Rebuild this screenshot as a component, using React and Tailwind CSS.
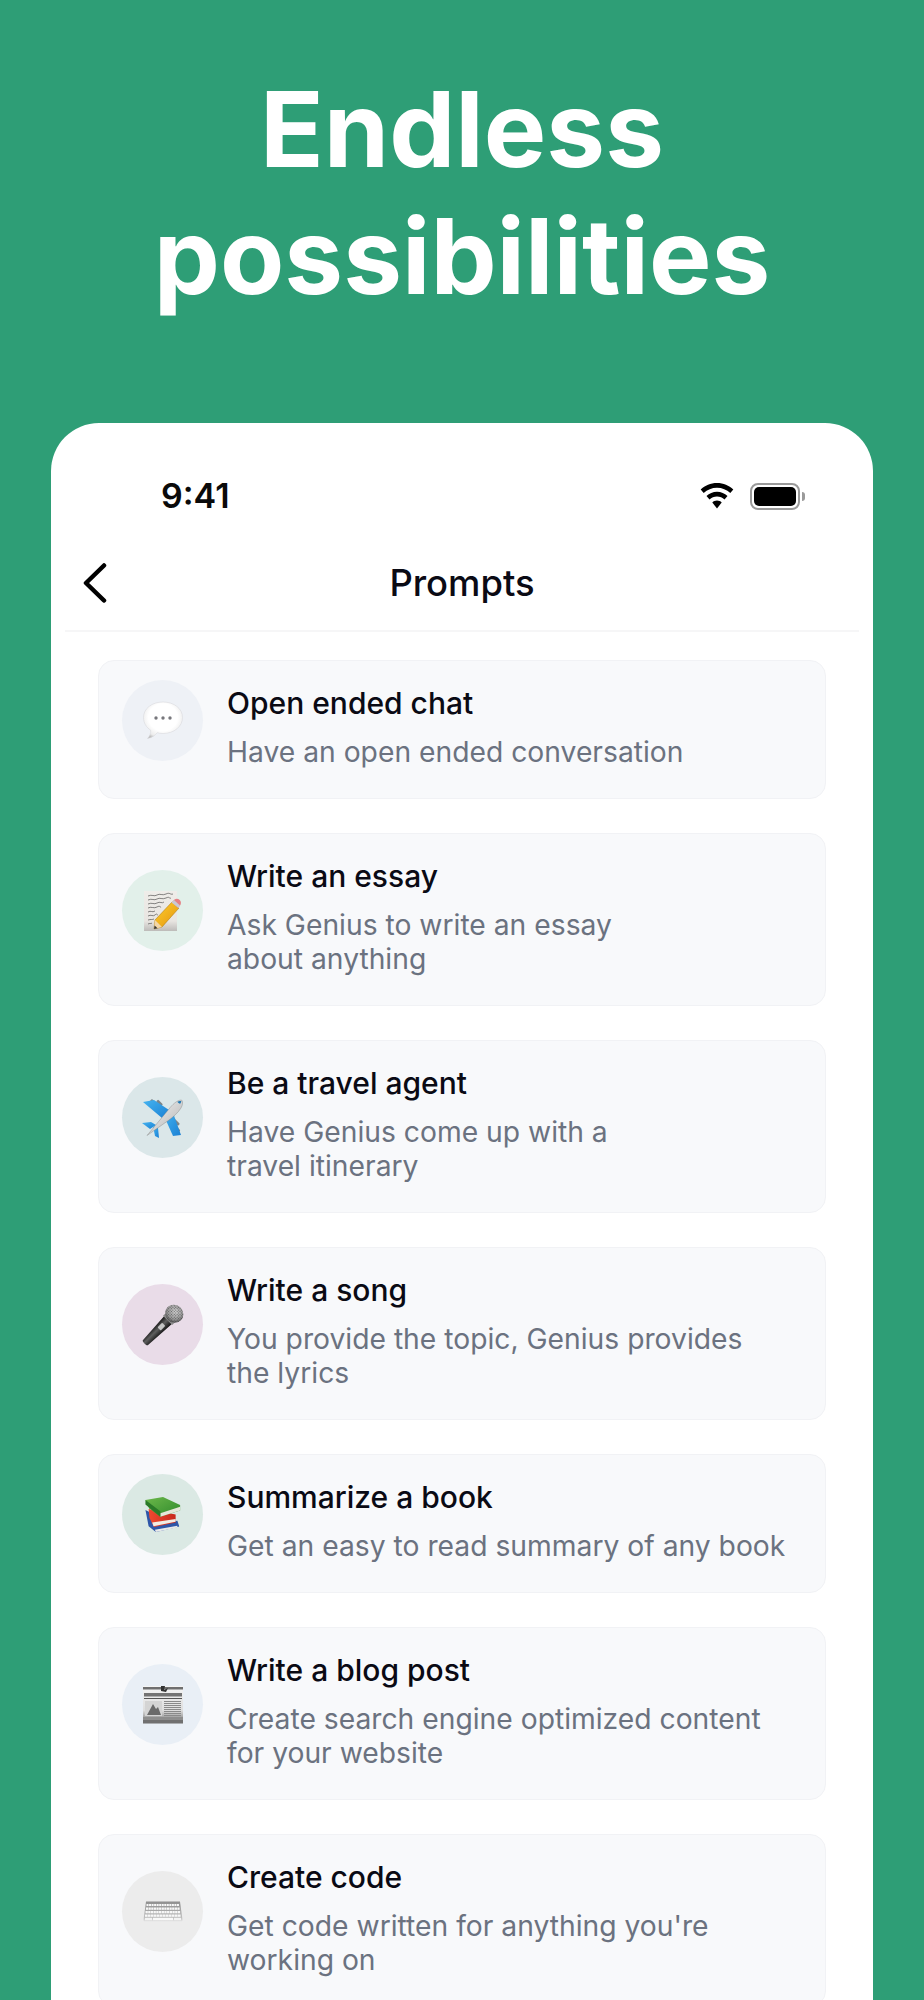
import React from "react";

function ChatIcon() {
  return (
    <svg width="44" height="44" viewBox="0 0 44 44">
      <defs>
        <radialGradient id="cg" cx="50%" cy="42%" r="62%">
          <stop offset="0.6" stopColor="#ffffff" />
          <stop offset="0.88" stopColor="#ececec" />
          <stop offset="1" stopColor="#bdbdbd" />
        </radialGradient>
      </defs>
      <path d="M22 3C33 3 41.500 9.500 41.500 18.500C41.500 27.500 33 34.500 22 34.500C19.800 34.500 17.900 34.200 16.200 33.700C14 36.500 11 38.700 6.500 39.500C8.800 37 9.800 34.500 9.700 31.200C5.300 28.400 2.500 23.800 2.500 18.500C2.500 9.500 11 3 22 3Z" fill="url(#cg)" stroke="#d5d5d8" strokeWidth="0.500" />
      <circle cx="15" cy="19" r="1.700" fill="#77777c" />
      <circle cx="22" cy="19" r="1.700" fill="#77777c" />
      <circle cx="29" cy="19" r="1.700" fill="#77777c" />
    </svg>
  );
}

function MemoIcon() {
  const lines = [
    "M5 6c4-2 6 1 9-1s5 1 9-1s4 1 7 0",
    "M5 10c4-2 6 1 9-1s5 1 9-1s3 1 5 0",
    "M5 14c4-2 6 1 9-1s5 1 7-1",
    "M5 18c3-2 6 1 9-1s4 1 4 0",
    "M5 22c3-2 4 1 7-1",
    "M5 26c3-2 5 1 7-1s2 0 3 0",
    "M5 30c3-1 4 0 6-1",
    "M5 34c2-1 3 0 4-1",
  ];
  return (
    <svg width="40" height="42" viewBox="0 0 40 42">
      <defs>
        <linearGradient id="mg" x1="0" y1="0" x2="0" y2="1">
          <stop offset="0" stopColor="#efede9" />
          <stop offset="0.75" stopColor="#e8e5e1" />
          <stop offset="1" stopColor="#bdbbb9" />
        </linearGradient>
        <linearGradient id="pg" x1="0" y1="0" x2="1" y2="1">
          <stop offset="0" stopColor="#ffd030" />
          <stop offset="1" stopColor="#e2920c" />
        </linearGradient>
      </defs>
      <rect x="1" y="1" width="33" height="40" fill="url(#mg)" />
      {lines.map((d, i) => (
        <path key={i} d={d} fill="none" stroke="#3a3a3a" strokeWidth="0.600" />
      ))}
      <path d="M12 30L29 12L36 18L19 37L11 39Z" fill="url(#pg)" stroke="#a8740a" strokeWidth="0.500" />
      <path d="M12 30L11 39L19 37Z" fill="#f3d6a8" />
      <path d="M11 39L11.600 35.500L14.500 38.300Z" fill="#333" />
      <path d="M29 12L31.500 9.500C33 8.300 35 8.300 36.700 10C38.300 11.600 38.300 13.800 37 15.500L35 18Z" fill="#e58085" />
      <path d="M28.500 12.500L31 10L37 15.500L35.500 18Z" fill="#c9c9d2" />
    </svg>
  );
}

function PlaneIcon() {
  return (
    <svg width="44" height="44" viewBox="0 0 44 44">
      <defs>
        <linearGradient id="wg" x1="0" y1="0" x2="1" y2="1">
          <stop offset="0" stopColor="#46b4f0" />
          <stop offset="1" stopColor="#1a80d4" />
        </linearGradient>
        <linearGradient id="fg" x1="0" y1="0" x2="1" y2="1">
          <stop offset="0" stopColor="#f8f8f8" />
          <stop offset="0.6" stopColor="#cccccc" />
          <stop offset="1" stopColor="#7b7b7b" />
        </linearGradient>
      </defs>
      <rect x="10.500" y="3" width="3" height="6" rx="1" fill="#7d8488" transform="rotate(-45 12 6)" />
      <rect x="17" y="3.500" width="3" height="7" rx="1" fill="#7d8488" transform="rotate(-45 18.500 7)" />
      <rect x="34" y="23" width="3" height="7" rx="1" fill="#7d8488" transform="rotate(-45 35.500 26.500)" />
      <rect x="34.500" y="29.500" width="3" height="7" rx="1" fill="#7d8488" transform="rotate(-45 36 33)" />
      <path d="M2 6L13 4L28 14L21 22Z" fill="url(#wg)" />
      <path d="M23 20L31 14L40 39L32 40Z" fill="url(#wg)" />
      <path d="M1 27L10 26L15 29L9 33Z" fill="url(#wg)" />
      <path d="M12 30L17 32L18 42L14 40Z" fill="url(#wg)" />
      <path d="M6 39.500L28 13C31 9 36 4 40.500 4C42 5 42 8.500 40 12C37 17 32 21 28 24Z" fill="url(#fg)" stroke="#7e7e7e" strokeWidth="0.400" />
      <path d="M36.500 5.800C38 5 39.500 4.800 40.400 5.500L39.200 7.700C38 7.500 37 6.900 36.500 5.800Z" fill="#1f7ab5" />
    </svg>
  );
}

function MicIcon() {
  return (
    <svg width="44" height="44" viewBox="0 0 44 44">
      <defs>
        <linearGradient id="bg2" x1="0" y1="0" x2="1" y2="0">
          <stop offset="0" stopColor="#161616" />
          <stop offset="0.45" stopColor="#5f5f5f" />
          <stop offset="1" stopColor="#111111" />
        </linearGradient>
        <radialGradient id="hg" cx="45%" cy="40%" r="60%">
          <stop offset="0" stopColor="#d2d2d2" />
          <stop offset="0.7" stopColor="#9a9a9a" />
          <stop offset="1" stopColor="#555555" />
        </radialGradient>
        <pattern id="mesh" width="2" height="2" patternUnits="userSpaceOnUse">
          <rect width="1" height="1" fill="#2f2f2f" opacity="0.600" />
        </pattern>
      </defs>
      <g transform="rotate(45 22 22)">
        <path d="M16.500 15L27.500 15L25.500 47C25.500 48.500 18.500 48.500 18.500 47Z" fill="url(#bg2)" />
        <rect x="19.800" y="21" width="4.400" height="6.500" rx="0.800" fill="#c4c4c4" />
        <rect x="15.500" y="12.500" width="13" height="3" fill="#8a8a8a" />
        <ellipse cx="22" cy="6" rx="9.300" ry="8.800" fill="url(#hg)" />
        <ellipse cx="22" cy="6" rx="9.300" ry="8.800" fill="url(#mesh)" />
      </g>
    </svg>
  );
}

function BooksIcon() {
  return (
    <svg width="36" height="37" viewBox="0 0 40 40">
      <defs>
        <linearGradient id="gb" x1="0" y1="0" x2="1" y2="1">
          <stop offset="0" stopColor="#6cb84a" />
          <stop offset="1" stopColor="#2f8a2c" />
        </linearGradient>
        <linearGradient id="rb" x1="0" y1="0" x2="1" y2="0">
          <stop offset="0" stopColor="#ee4a30" />
          <stop offset="1" stopColor="#c8281c" />
        </linearGradient>
      </defs>
      <path d="M0.500 15L26 28L36 27L38 33C38 34 26 36 12 39.500L4 33Z" fill="#2f56a8" />
      <path d="M11 37L36 32.500L36 34.500L12 39.500Z" fill="#e9e9e9" />
      <path d="M4 14L34 20L34 29L10 34L5 24Z" fill="url(#rb)" />
      <path d="M8 29L34 25L34 28L9.500 33Z" fill="#f1ece5" />
      <path d="M0.500 4L20 0.500L39 9.500L39 15.500L17 22.500L4.500 13Z" fill="url(#gb)" />
      <path d="M17 18.500L39 11.500L39 15.500L17 22.500Z" fill="#e7e7d9" />
      <path d="M0.500 4L17 16.500L17 22.500L0.500 9Z" fill="#2a7a28" />
    </svg>
  );
}

function NewsIcon() {
  return (
    <svg width="40" height="38" viewBox="0 0 40 38">
      <defs>
        <linearGradient id="ng" x1="0" y1="0" x2="0" y2="1">
          <stop offset="0" stopColor="#f5f5f5" />
          <stop offset="0.65" stopColor="#dedede" />
          <stop offset="1" stopColor="#6b6b6b" />
        </linearGradient>
      </defs>
      <rect x="0" y="0" width="40" height="37.500" fill="url(#ng)" />
      <rect x="0" y="1" width="40" height="2.500" fill="#6f6f6f" />
      <path d="M18 0L22 0L21 4L25 2L23 6L18 5Z" fill="#333" />
      <rect x="1" y="7" width="38" height="3.500" fill="#555" opacity="0.800" />
      <rect x="1" y="12" width="38" height="1" fill="#555" />
      <rect x="2" y="15" width="17" height="15" fill="#d4d4d4" />
      <path d="M4 29L10 18L13 23L15 21L18 29Z" fill="#6a6a6a" />
      {[15, 17, 19, 21, 23, 25, 27, 29].map((y) => (
        <rect key={y} x="21" y={y} width="17" height="1" fill="#8a8a8a" />
      ))}
      <rect x="0" y="31" width="40" height="2" fill="#8d8d8d" />
      <rect x="0" y="34" width="40" height="3" fill="#707070" />
    </svg>
  );
}

function KeyboardIcon() {
  const rows = [
    { y: 3, n: 13, x: 3.500, w: 2, h: 2 },
    { y: 6.500, n: 13, x: 3, w: 2.200, h: 2.300 },
    { y: 10, n: 13, x: 2.500, w: 2.300, h: 2.300 },
    { y: 13.500, n: 12, x: 2, w: 2.600, h: 2.300 },
  ];
  return (
    <svg width="40" height="21" viewBox="0 0 40 21">
      <defs>
        <linearGradient id="kg" x1="0" y1="0" x2="0" y2="1">
          <stop offset="0" stopColor="#8f8f8f" />
          <stop offset="0.8" stopColor="#bdbdbd" />
          <stop offset="1" stopColor="#e6e6e6" />
        </linearGradient>
      </defs>
      <path d="M3 0.500L37 0.500L39.500 19C39.500 20 39 20.500 38 20.500L2 20.500C1 20.500 0.500 20 0.500 19Z" fill="url(#kg)" />
      {rows.map((r) =>
        Array.from({ length: r.n }).map((_, i) => (
          <rect key={r.y + "-" + i} x={r.x + i * ((40 - 2 * r.x) / r.n)} y={r.y} width={r.w} height={r.h} fill="#f8f8f8" />
        ))
      )}
      <rect x="10" y="16.800" width="20" height="2.400" fill="#fafafa" />
      <rect x="2" y="16.800" width="7" height="2.400" fill="#f4f4f4" />
      <rect x="31" y="16.800" width="7" height="2.400" fill="#f4f4f4" />
    </svg>
  );
}

const items = [
  { title: "Open ended chat", lines: ["Have an open ended conversation"], bg: "bg-[#eef1f6]", Icon: ChatIcon },
  { title: "Write an essay", lines: ["Ask Genius to write an essay", "about anything"], bg: "bg-[#e2f0ea]", Icon: MemoIcon },
  { title: "Be a travel agent", lines: ["Have Genius come up with a", "travel itinerary"], bg: "bg-[#dbe7e9]", Icon: PlaneIcon },
  { title: "Write a song", lines: ["You provide the topic, Genius provides", "the lyrics"], bg: "bg-[#e9dce8]", Icon: MicIcon },
  { title: "Summarize a book", lines: ["Get an easy to read summary of any book"], bg: "bg-[#dbe9e4]", Icon: BooksIcon },
  { title: "Write a blog post", lines: ["Create search engine optimized content", "for your website"], bg: "bg-[#e9eff6]", Icon: NewsIcon },
  { title: "Create code", lines: ["Get code written for anything you're", "working on"], bg: "bg-[#ececec]", Icon: KeyboardIcon },
];

function Row({ item }) {
  const { Icon } = item;
  return (
    <div className="flex items-center gap-[24px] rounded-[16px] border border-[#f1f2f5] bg-[#f8f9fb] pl-[23px] pr-[20px] pt-[25px] pb-[29px]">
      <div className={"-mt-[14px] flex h-[81px] w-[81px] shrink-0 items-center justify-center rounded-full " + item.bg}>
        <Icon />
      </div>
      <div className="min-w-0">
        <div className="text-[30px] leading-[34px] font-medium whitespace-nowrap text-[#0a0a14]">{item.title}</div>
        <div className="mt-[15px] text-[28.250px] leading-[34px] whitespace-nowrap text-[#6b7280]">
          {item.lines.map((l, i) => (
            <div key={i}>{l}</div>
          ))}
        </div>
      </div>
    </div>
  );
}

export default function App() {
  return (
    <div className="h-[2000px] w-[924px] overflow-hidden bg-[#2e9e76] font-['Inter',sans-serif]">
      <h1 className="pt-[65px] text-center text-[105px] leading-[127px] font-bold text-white">
        Endless
        <br />
        possibilities
      </h1>
      <div className="mx-[51px] mt-[104px] h-[1600px] rounded-t-[48px] bg-white">
        <div className="flex items-start justify-between pt-[54px] pl-[110px] pr-[68px]">
          <span className="text-[34px] leading-[38px] font-semibold text-[#0a0a0a]">9:41</span>
          <div className="flex h-[38px] items-center gap-[16px]">
            <svg width="34" height="26" viewBox="0 0 34 26">
              <path d="M17 0C10.500 0 5 2.500 0.700 6.500L3.700 10C7.300 6.700 11.900 4.700 17 4.700C22.100 4.700 26.700 6.700 30.300 10L33.300 6.500C29 2.500 23.500 0 17 0Z" fill="#000" />
              <path d="M17 8.800C12.900 8.800 9.300 10.400 6.500 13L9.500 16.400C11.500 14.600 14.100 13.500 17 13.500C19.900 13.500 22.500 14.600 24.500 16.400L27.500 13C24.700 10.400 21.100 8.800 17 8.800Z" fill="#000" />
              <path d="M17 17.600C15.200 17.600 13.600 18.300 12.300 19.400L17 25.500L21.700 19.400C20.400 18.300 18.800 17.600 17 17.600Z" fill="#000" />
            </svg>
            <div className="flex items-center gap-[2px]">
              <div className="flex h-[27px] w-[50px] items-center justify-center rounded-[8px] border-2 border-[#9a9a9a] p-[2px]">
                <div className="h-full w-full rounded-[5px] bg-black" />
              </div>
              <div className="h-[9px] w-[3px] rounded-r-[3px] bg-[#9a9a9a]" />
            </div>
          </div>
        </div>
        <div className="mx-[14px] flex h-[117px] items-center border-b-2 border-[#f6f6f7] pt-[20px]">
          <div className="flex w-[43px] justify-end">
            <svg width="26" height="40" viewBox="0 0 26 40" fill="none">
              <path d="M22 2.500L4 20L22 37.500" stroke="#000" strokeWidth="4.500" strokeLinecap="round" strokeLinejoin="round" />
            </svg>
          </div>
          <div className="flex-1 pr-[43px] text-center text-[36.400px] leading-[44px] font-medium text-[#0a0a14]">Prompts</div>
        </div>
        <div className="flex flex-col gap-[34px] px-[47px] pt-[28px]">
          {items.map((item) => (
            <Row key={item.title} item={item} />
          ))}
        </div>
      </div>
    </div>
  );
}
